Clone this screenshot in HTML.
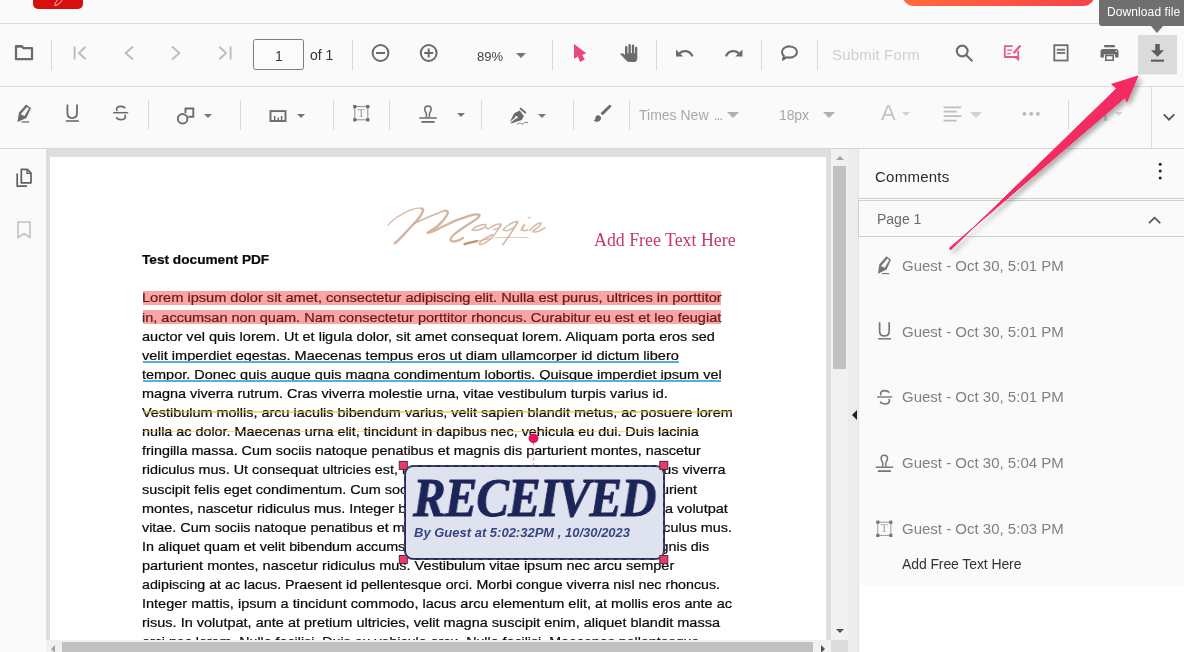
<!DOCTYPE html>
<html>
<head>
<meta charset="utf-8">
<title>PDF Viewer</title>
<style>
*{box-sizing:border-box;margin:0;padding:0}
html,body{width:1184px;height:652px;overflow:hidden;background:#fafafa;font-family:"Liberation Sans",sans-serif;}
.abs{position:absolute}
#root{position:relative;width:1184px;height:652px;overflow:hidden;background:#fafafa}
.hl{position:absolute;left:0;width:1184px;height:1px;background:#dcdcdc}
.sep{position:absolute;width:1px;background:#d9d9d9}
.t{position:absolute;white-space:nowrap;line-height:1;will-change:transform}
svg{position:absolute;overflow:visible}
.ic{fill:#6b6b6b}
.icd{fill:#b9b9b9}
.dd{position:absolute;width:0;height:0;border-left:5.5px solid transparent;border-right:5.5px solid transparent;border-top:5.5px solid #757575}
.dds{position:absolute;width:0;height:0;border-left:4.5px solid transparent;border-right:4.5px solid transparent;border-top:4.5px solid #757575}
.bl{will-change:transform;position:absolute;left:143px;white-space:nowrap;font-size:13px;line-height:15px;height:15px;color:#0a0a0a;transform-origin:0 0;-webkit-text-stroke:0.22px #0a0a0a}
.cm{will-change:transform;position:absolute;left:902px;white-space:nowrap;font-size:15px;line-height:1;color:#808080;transform-origin:0 0}
</style>
</head>
<body>
<div id="root">

<!-- ===== top strip ===== -->
<div class="abs" id="logo" style="left:33px;top:-12px;width:50px;height:21px;border-radius:5px;background:#d80f0f"></div>
<svg style="left:0;top:0" width="100" height="12" viewBox="0 0 100 12"><path d="M62.500 -1C61 2.500 57.500 5.500 55 5.600 54.200 5.300 55.500 2.500 58 -1" fill="none" stroke="#ffd9d9" stroke-width="0.900"/></svg>
<div class="abs" id="pill" style="left:902px;top:-30px;width:193px;height:36px;border-radius:12px;background:linear-gradient(90deg,#ff6b3d 0%,#f7414a 100%)"></div>
<div class="hl" style="top:23px"></div>

<!-- ===== toolbar 1 ===== -->
<div id="tb1">
<!-- folder -->
<svg style="left:0;top:0" width="1184" height="90" viewBox="0 0 1184 90">
 <g id="i-folder" fill="none" stroke="#6b6b6b" stroke-width="2.2" stroke-linejoin="round">
  <path d="M16 59.2V46h5.6l2 2.2H32v11z"/>
  <path d="M16 46.4h5.8" stroke-width="2.6"/>
 </g>
 <g id="i-nav" fill="none" stroke="#bcbcbc" stroke-width="1.9">
  <path d="M74.6 46.5v13M85.6 46.8l-6.6 6.2 6.6 6.2"/>
  <path d="M133 46.5l-7.4 6.5 7.4 6.5"/>
  <path d="M172 46.5l7.4 6.5-7.4 6.5"/>
  <path d="M219.4 46.8l6.6 6.2-6.6 6.2M230.6 46.5v13"/>
 </g>
 <g id="i-zoom" fill="none" stroke="#6b6b6b" stroke-width="2">
  <circle cx="380.5" cy="53" r="7.9"/><path d="M376 53h9"/>
  <circle cx="428.7" cy="53" r="7.9"/><path d="M424.2 53h9M428.7 48.5v9"/>
 </g>
 <path id="i-ptr" fill="#e8487b" d="M574 43.9v14.8l3.9-2.2 2.2 5.4 4.6-2.3-2.5-4.7 4.1-1.7z"/>
 <g id="i-hand" fill="#6b6b6b">
  <path d="M625 47.2a1.2 1.2 0 0 1 2.4 0v6h1v-8a1.2 1.2 0 0 1 2.4 0v8h1v-7.4a1.2 1.2 0 0 1 2.4 0v7.4h.8v-5.2a1.15 1.15 0 0 1 2.3 0v10.4c0 2.4-1.8 3.6-4 3.6h-3.600c-1.700 0-2.800-.7-3.900-1.900l-5.600-6c.9-1.100 2.200-1 3.200-.3l1.600 1.200z"/>
 </g>
 <g id="i-undo" fill="#6b6b6b" transform="translate(0,0.800)">
  <path d="M676 48.600v7.200h7.200l-2.700-2.700c1.500-1.200 3.100-1.700 4.700-1.700 2.900 0 5.100 1.700 6.300 4.600l2-.7c-1.400-3.700-4.500-6-8.300-6-2.300 0-4.500.8-6.200 2.300z"/>
  <path d="M742.400 48.600v7.200h-7.200l2.700-2.700c-1.500-1.200-3.100-1.700-4.700-1.700-2.900 0-5.100 1.700-6.300 4.600l-2-.7c1.400-3.700 4.500-6 8.300-6 2.300 0 4.500.8 6.200 2.300z"/>
 </g>
 <g id="i-comment" fill="none" stroke="#6b6b6b" stroke-width="2.050" stroke-linejoin="round">
  <path d="M789.500 46.400c4.200 0 7.500 2.500 7.500 5.600s-3.300 5.600-7.500 5.600c-1 0-2-.15-2.900-.4l-3.600 2.400.9-3.700c-1.200-1-1.900-2.400-1.900-3.900 0-3.100 3.300-5.600 7.500-5.600z"/>
 </g>
 <g id="i-search" fill="none" stroke="#6b6b6b" stroke-width="2.100">
  <circle cx="962.200" cy="51" r="5.400"/><path d="M966.200 55l6.200 6.200"/>
 </g>
 <g id="i-annot" fill="none" stroke="#e35c8a" stroke-width="1.800">
  <path d="M1012.600 46.200h-7.800v10.800h13.400v-6"/>
  <path d="M1014.200 57.200h4.700v3.600z" fill="#e35c8a" stroke-width="0.600"/>
  <path d="M1007.200 50.200h5M1007.200 53.700h3.400" stroke-width="1.300"/>
  <path d="M1013.600 53.200l6.800-7.800" stroke-width="2.300"/>
 </g>
 <g id="i-form" fill="none" stroke="#6b6b6b" stroke-width="1.800">
  <rect x="1054.300" y="45.200" width="13.300" height="15.300"/>
  <path d="M1056.800 49.700h8.300M1056.800 53.100h8.300" stroke-width="2" stroke="#7a7a7a"/>
 </g>
 <g id="i-print" fill="#6b6b6b">
  <rect x="1104.200" y="45" width="10.600" height="2.300"/>
  <path d="M1103 49h13c1.500 0 2.500 1.100 2.500 2.500v6h-3.400v-3h-11.200v3h-3.400v-6c0-1.400 1-2.500 2.500-2.500z"/>
  <circle cx="1116.200" cy="51.300" r="0.800" fill="#e8e8e8"/>
  <path d="M1105.800 55.500h7.400v4.700h-7.400z" fill="none" stroke="#6b6b6b" stroke-width="1.600"/>
 </g>
 <rect x="1138" y="35" width="39" height="39.500" fill="#dbdbdb"/>
 <g id="i-dl" fill="#5f5f5f">
  <path d="M1155.200 44h4.600v6.200h4.200l-6.500 6.600-6.500-6.600h4.200z"/>
  <rect x="1151" y="59.600" width="13" height="2.100"/>
 </g>
</svg>
<div class="sep" style="left:51px;top:40px;height:30px"></div>
<div class="sep" style="left:352px;top:40px;height:30px"></div>
<div class="sep" style="left:552px;top:40px;height:30px"></div>
<div class="sep" style="left:656px;top:40px;height:30px"></div>
<div class="sep" style="left:761px;top:40px;height:30px"></div>
<div class="sep" style="left:817px;top:40px;height:30px"></div>
<div class="abs" style="left:253.400px;top:39px;width:50.400px;height:30.600px;border:1px solid #7d7d7d;border-radius:2.500px;background:#fbfbfb"></div>
<div class="t" style="left:274.500px;top:48.600px;font-size:14px;color:#3a3a3a">1</div>
<div class="t" style="left:310px;top:48px;font-size:14px;color:#333">of 1</div>
<div class="t" style="left:477px;top:49.500px;font-size:13px;color:#444">89%</div>
<div class="dd" style="left:515.500px;top:52.800px"></div>
<div class="t" style="left:831.500px;top:47.300px;font-size:15px;color:#cfcfcf;letter-spacing:0.180px">Submit Form</div>
</div>
<div class="hl" style="top:86px"></div>

<!-- ===== toolbar 2 ===== -->
<div id="tb2">
<svg style="left:0;top:0" width="1184" height="150" viewBox="0 0 1184 150">
 <g id="i-hl" fill="#6b6b6b" fill-rule="evenodd" transform="translate(-860.400,-151.700) scale(1)"><path d="M886.400 256.200L891.400 259.700 886.800 269.600 877.900 273.700 879.300 264.500zM887.400 258.700l2 1.300-4.500 7.700-3.800-1.800z"/><path d="M882 273h7.600v1.300h-7.600z"/></g>
 <g id="i-ul" fill="none" stroke="#6b6b6b">
  <path d="M67.400 104.500v8.600c0 3 2 5 4.800 5s4.800-2 4.800-5v-8.600" stroke-width="1.800"/>
  <path d="M65.900 121h12.900" stroke-width="1.600"/>
 </g>
 <g id="i-st" fill="none" stroke="#6b6b6b" stroke-width="1.700">
  <path d="M125.100 108.400c-.5-1.300-2-2.100-4.200-2.100-2.600 0-4.300 1.200-4.300 3 0 .7.200 1.200.6 1.700"/>
  <path d="M116.300 117.300c.5 1.500 2.200 2.400 4.600 2.400 2.700 0 4.500-1.300 4.500-3.200 0-.7-.2-1.300-.6-1.800"/>
  <path d="M113.100 112.700h15.100" stroke-width="1.500"/>
 </g>
 <g id="i-shape" fill="none" stroke="#6b6b6b" stroke-width="1.900">
  <path d="M185.500 113v-4.500h7.800v8.300h-5"/>
  <circle cx="182.600" cy="118.800" r="4.800"/>
 </g>
 <g id="i-meas" fill="none" stroke="#6b6b6b">
  <rect x="270.500" y="111.100" width="15" height="9.900" stroke-width="1.900"/>
  <path d="M274.700 120.500v-4.500M278.300 120.500v-3M281.600 120.500v-4.500" stroke-width="1.500"/>
 </g>
 <g id="i-ft">
  <rect x="354.800" y="106.600" width="13" height="13.200" fill="none" stroke="#8c8c8c" stroke-width="1"/>
  <g fill="#6b6b6b"><rect x="353.200" y="105" width="3.200" height="3.200"/><rect x="366.200" y="105" width="3.200" height="3.200"/><rect x="353.200" y="118.200" width="3.200" height="3.200"/><rect x="366.200" y="118.200" width="3.200" height="3.200"/></g>
  <text x="361.300" y="116.700" font-family="Liberation Serif, serif" font-size="11.500" fill="#9a9a9a" text-anchor="middle">T</text>
 </g>
 <g id="i-stamp" fill="none" stroke="#6b6b6b">
  <path d="M426.400 117.600v-3.600c0-1.200-1.700-2.400-1.700-4.700 0-1.900 1.400-3.300 3.200-3.300s3.200 1.400 3.200 3.300c0 2.300-1.700 3.500-1.700 4.700v3.600" stroke-width="1.500"/>
  <path d="M419.300 118h17.500" stroke-width="1.500"/>
  <path d="M421.500 121.900h13" stroke-width="1.800"/>
 </g>
 <g id="i-sig" fill="#6b6b6b">
  <path d="M514.200 113.300l5.600-2.700 4 5.300-2 4-10.400 3.600-.8-.7 5.300-4.400a1.300 1.300 0 1 0-.8-.9l-5.300 4.400z"/>
  <path d="M520 108.300l5.900 4.700" fill="none" stroke="#6b6b6b" stroke-width="2"/>
  <path d="M517.200 124.400c1.200-.9 2.200-1.600 3.200-1.300s1.200 1.100 2.300.9 1.800-1.700 3-1.700 1.200.5 2.300.4" fill="none" stroke="#6b6b6b" stroke-width="0.900"/>
 </g>
 <g id="i-ink" fill="#6b6b6b">
  <path d="M609.700 104.600l1.900 1.900-8.900 8.800-2.200-2z"/>
  <path d="M598 115.200c1.700 0 3 1.300 3 3 0 2.200-2 3.500-4 3.500-1.300 0-2.500-.5-3.300-1.300 1 0 1.600-.8 1.600-2.100 0-1.700 1.100-3.100 2.700-3.100z"/>
 </g>
 <g id="i-align" fill="none" stroke="#bdbdbd" stroke-width="1.700">
  <path d="M943.600 107.300h17.700M943.600 111.700h13.100M943.600 116.200h17.700M943.600 120.700h13.100"/>
 </g>
 <g fill="#b7b7b7"><circle cx="1024.500" cy="113.800" r="1.900"/><circle cx="1031.200" cy="113.800" r="1.900"/><circle cx="1037.900" cy="113.800" r="1.900"/></g>
 <circle cx="1105.600" cy="119.500" r="1.500" fill="#c4c4c4"/>
 <path d="M1103.800 117.500l1.800-3.500 1.800 3.500z" fill="#c4c4c4"/>
 <path id="i-chev" d="M1163.700 114.400l5.300 5.300 5.300-5.300" fill="none" stroke="#555" stroke-width="1.800"/>
</svg>
<div class="sep" style="left:148px;top:100px;height:30px"></div>
<div class="sep" style="left:240px;top:100px;height:30px"></div>
<div class="sep" style="left:333px;top:100px;height:30px"></div>
<div class="sep" style="left:389px;top:100px;height:30px"></div>
<div class="sep" style="left:481px;top:100px;height:30px"></div>
<div class="sep" style="left:573px;top:100px;height:30px"></div>
<div class="sep" style="left:629px;top:100px;height:30px"></div>
<div class="sep" style="left:1068px;top:100px;height:30px"></div>
<div class="sep" style="left:1151px;top:87px;height:61px;background:#dcdcdc"></div>
<div class="dds" style="left:204.200px;top:114px"></div>
<div class="dds" style="left:296.800px;top:114px"></div>
<div class="dds" style="left:456.800px;top:113.200px"></div>
<div class="dds" style="left:538px;top:114px"></div>
<div class="t" style="left:638.600px;top:107.800px;font-size:14px;color:#a8a8a8">Times New<span style="letter-spacing:-1.100px;margin-left:5.200px">...</span></div>
<div class="dd" style="left:726.800px;top:112.100px;border-top-color:#b0b0b0;border-width:6.400px 6.200px 0 6.200px"></div>
<div class="t" style="left:779.300px;top:107.800px;font-size:14px;color:#a8a8a8;letter-spacing:-0.150px">18px</div>
<div class="dd" style="left:823.300px;top:112.100px;border-top-color:#b0b0b0;border-width:6.400px 6.200px 0 6.200px"></div>
<div class="t" style="left:880.800px;top:102.200px;font-size:22px;color:#c4c4c4;">A</div>
<div class="dds" style="left:902.400px;top:112.300px;border-top-color:#d2d2d2;border-width:4.300px 4.100px 0 4.100px"></div>
<div class="dd" style="left:969.700px;top:112.300px;border-top-color:#d2d2d2;border-width:6px 6px 0 6px"></div>
<div class="dds" style="left:1114.700px;top:112px;border-top-color:#dadada;border-width:4.300px 4.100px 0 4.100px"></div>
</div>
<div class="hl" style="top:148px;background:#d6d6d6"></div>

<!-- ===== main ===== -->
<div class="abs" id="viewer" style="left:46px;top:149px;width:812px;height:503px;background:#dedede"></div>
<div class="abs" id="page" style="left:50px;top:157px;width:776px;height:483px;background:#fff;overflow:hidden">
<div class="bl" style="left:92.400px;top:94.60px;font-weight:bold;transform:scaleX(1.0503)">Test document PDF</div>
<div class="bl" style="left:92.400px;top:133.40px;transform:scaleX(1.1221)">Lorem ipsum dolor sit amet, consectetur adipiscing elit. Nulla est purus, ultrices in porttitor</div>
<div class="bl" style="left:92.400px;top:152.51px;transform:scaleX(1.1165)">in, accumsan non quam. Nam consectetur porttitor rhoncus. Curabitur eu est et leo feugiat</div>
<div class="bl" style="left:92.400px;top:171.62px;transform:scaleX(1.1165)">auctor vel quis lorem. Ut et ligula dolor, sit amet consequat lorem. Aliquam porta eros sed</div>
<div class="bl" style="left:92.400px;top:190.73px;transform:scaleX(1.1172)">velit imperdiet egestas. Maecenas tempus eros ut diam ullamcorper id dictum libero</div>
<div class="bl" style="left:92.400px;top:209.84px;transform:scaleX(1.1126)">tempor. Donec quis augue quis magna condimentum lobortis. Quisque imperdiet ipsum vel</div>
<div class="bl" style="left:92.400px;top:228.95px;transform:scaleX(1.1093)">magna viverra rutrum. Cras viverra molestie urna, vitae vestibulum turpis varius id.</div>
<div class="bl" style="left:92.400px;top:248.06px;transform:scaleX(1.1092)">Vestibulum mollis, arcu iaculis bibendum varius, velit sapien blandit metus, ac posuere lorem</div>
<div class="bl" style="left:92.400px;top:267.17px;transform:scaleX(1.1037)">nulla ac dolor. Maecenas urna elit, tincidunt in dapibus nec, vehicula eu dui. Duis lacinia</div>
<div class="bl" style="left:92.400px;top:286.28px;transform:scaleX(1.1030)">fringilla massa. Cum sociis natoque penatibus et magnis dis parturient montes, nascetur</div>
<div class="bl" style="left:92.400px;top:305.39px;transform:scaleX(1.1037)">ridiculus mus. Ut consequat ultricies est, non rhoncus mauris congue porta. Vivamus viverra</div>
<div class="bl" style="left:92.400px;top:324.50px;transform:scaleX(1.1085)">suscipit felis eget condimentum. Cum sociis natoque penatibus et magnis dis parturient</div>
<div class="bl" style="left:92.400px;top:343.61px;transform:scaleX(1.1119)">montes, nascetur ridiculus mus. Integer bibendum sagittis ligula, non faucibus nulla volutpat</div>
<div class="bl" style="left:92.400px;top:362.72px;transform:scaleX(1.1049)">vitae. Cum sociis natoque penatibus et magnis dis parturient montes, nascetur ridiculus mus.</div>
<div class="bl" style="left:92.400px;top:381.83px;transform:scaleX(1.1007)">In aliquet quam et velit bibendum accumsan. Cum sociis natoque penatibus et magnis dis</div>
<div class="bl" style="left:92.400px;top:400.94px;transform:scaleX(1.1127)">parturient montes, nascetur ridiculus mus. Vestibulum vitae ipsum nec arcu semper</div>
<div class="bl" style="left:92.400px;top:420.05px;transform:scaleX(1.0942)">adipiscing at ac lacus. Praesent id pellentesque orci. Morbi congue viverra nisl nec rhoncus.</div>
<div class="bl" style="left:92.400px;top:439.16px;transform:scaleX(1.1155)">Integer mattis, ipsum a tincidunt commodo, lacus arcu elementum elit, at mollis eros ante ac</div>
<div class="bl" style="left:92.400px;top:458.27px;transform:scaleX(1.1156)">risus. In volutpat, ante at pretium ultricies, velit magna suscipit enim, aliquet blandit massa</div>
<div class="bl" style="left:92.400px;top:477.38px;transform:scaleX(1.0943)">orci nec lorem. Nulla facilisi. Duis eu vehicula arcu. Nulla facilisi. Maecenas pellentesque</div>
<div class="abs" style="left:93px;top:134px;width:578.4px;height:13.5px;background:rgba(238,40,38,0.42)"></div>
<div class="abs" style="left:93px;top:153px;width:578px;height:14px;background:rgba(238,40,38,0.42)"></div>
<div class="abs" style="left:93px;top:203.6px;width:535.6px;height:2px;background:#4fb1dc"></div>
<div class="abs" style="left:93px;top:222.8px;width:578.4px;height:2px;background:#4fb1dc"></div>
<div class="abs" style="left:93px;top:254px;width:589.4px;height:1.8px;background:#f5da72;mix-blend-mode:multiply"></div>
<div class="abs" style="left:93px;top:254px;width:589.4px;height:1.8px;background:rgba(245,218,114,0.5)"></div>
<div class="abs" style="left:93px;top:273.7px;width:555.5px;height:1.8px;background:#f5da72;mix-blend-mode:multiply"></div>
<div class="abs" style="left:93px;top:273.7px;width:555.5px;height:1.8px;background:rgba(245,218,114,0.5)"></div>
<div class="t" style="left:543.6px;top:75px;font-family:'Liberation Serif',serif;font-size:17.85px;color:#c8366c">Add Free Text Here</div>
</div>

<!-- ===== right panel ===== -->
<div id="panel">
<!-- left sidebar icons -->
<svg style="left:0;top:149px" width="46" height="120" viewBox="0 149 46 120">
 <g fill="none" stroke="#5f5f5f" stroke-width="1.700" stroke-linejoin="round">
  <path d="M21.300 169.400h6l3.700 3.700v9.700h-9.700z"/>
  <path d="M27 169.600v3.800h3.800" stroke-width="1.300"/>
  <path d="M17.200 173.500v12.600h9.800"/>
 </g>
 <path d="M18 222h12v15.500l-6-3.800-6 3.800z" fill="none" stroke="#c2c2c2" stroke-width="1.600" stroke-linejoin="round"/>
</svg>

<!-- vertical scrollbar -->
<div class="abs" style="left:831px;top:149px;width:17px;height:491px;background:#f1f1f1"></div>
<div class="abs" style="left:848px;top:149px;width:10px;height:503px;background:#ececec"></div>
<div class="abs" style="left:833px;top:166px;width:13px;height:202.500px;background:#c1c1c1"></div>
<div class="abs" style="left:835.500px;top:155.500px;width:0;height:0;border-left:4px solid transparent;border-right:4px solid transparent;border-bottom:4.500px solid #a3a3a3"></div>
<div class="abs" style="left:835.500px;top:628.500px;width:0;height:0;border-left:4px solid transparent;border-right:4px solid transparent;border-top:4.500px solid #505050"></div>
<!-- splitter arrow -->
<div class="abs" style="left:851.700px;top:410px;width:0;height:0;border-top:5px solid transparent;border-bottom:5px solid transparent;border-right:5px solid #222"></div>
<!-- horizontal scrollbar -->
<div class="abs" style="left:46px;top:640px;width:785px;height:12px;background:#f1f1f1"></div>
<div class="abs" style="left:62px;top:642px;width:751px;height:10px;background:#c1c1c1"></div>
<div class="abs" style="left:831px;top:640px;width:17px;height:12px;background:#dcdcdc"></div>
<div class="abs" style="left:50.800px;top:644.500px;width:0;height:0;border-top:4px solid transparent;border-bottom:4px solid transparent;border-right:4.500px solid #a3a3a3"></div>
<div class="abs" style="left:821px;top:644.500px;width:0;height:0;border-top:4px solid transparent;border-bottom:4px solid transparent;border-left:4.500px solid #505050"></div>

<!-- comment panel -->
<div class="abs" style="left:858px;top:149px;width:326px;height:503px;background:#fff;border-left:1px solid #e2e2e2"></div>
<div class="abs" style="left:859px;top:149px;width:325px;height:436px;background:#fafafa"></div>
<div class="t" style="left:874.500px;top:169.300px;font-size:15px;color:#2b2b2b;letter-spacing:0.250px">Comments</div>
<div class="abs" style="left:858px;top:198px;width:326px;height:1px;background:#cfcfcf"></div>
<div class="abs" style="left:858px;top:200px;width:330px;height:37px;border:1px solid #cfcfcf;background:#fafafa"></div>
<div class="t" style="left:876.800px;top:211.800px;font-size:14px;color:#6a6a6a">Page 1</div>
<svg style="left:858px;top:149px" width="326" height="503" viewBox="858 149 326 503">
 <g fill="#222"><circle cx="1160.200" cy="164.300" r="1.500"/><circle cx="1160.200" cy="171.100" r="1.500"/><circle cx="1160.200" cy="177.900" r="1.500"/></g>
 <path d="M1149 223.200l5.600-5.600 5.600 5.600" fill="none" stroke="#555" stroke-width="1.700"/>

 <g id="c-hl" fill="#777" fill-rule="evenodd"><path d="M886.400 256.200L891 259.700 886.600 269.600 877.900 273.700 879.300 264.500zM887.400 258.700l1.800 1.300-4.400 7.700-3.700-1.800z"/><path d="M882 273h7.200v1.200h-7.200z"/></g>
 <g id="c-ul" fill="none" stroke="#777" transform="translate(812.200,217.800)">
  <path d="M67.400 104.500v8.600c0 3 2 5 4.800 5s4.800-2 4.800-5v-8.600" stroke-width="1.700"/>
  <path d="M65.900 121h12.900" stroke-width="1.500"/>
 </g>
 <g id="c-st" fill="none" stroke="#777" stroke-width="1.600" transform="translate(764,284.300)">
  <path d="M125.100 108.400c-.5-1.300-2-2.100-4.200-2.100-2.600 0-4.300 1.200-4.300 3 0 .7.200 1.200.6 1.700"/>
  <path d="M116.300 117.300c.5 1.500 2.200 2.400 4.600 2.400 2.700 0 4.500-1.300 4.500-3.200 0-.7-.2-1.300-.6-1.800"/>
  <path d="M113.100 112.700h15.100" stroke-width="1.400"/>
 </g>
 <g id="c-stamp" fill="none" stroke="#777" transform="translate(456.400,349.200)">
  <path d="M426.400 117.600v-3.600c0-1.200-1.700-2.400-1.700-4.700 0-1.900 1.400-3.300 3.200-3.300s3.200 1.400 3.200 3.300c0 2.300-1.700 3.500-1.700 4.700v3.600" stroke-width="1.500"/>
  <path d="M419.300 118h17.500" stroke-width="1.500"/>
  <path d="M421.500 121.900h13" stroke-width="1.800"/>
 </g>
 <g id="c-ft" transform="translate(523,415.600)">
  <rect x="354.800" y="106.600" width="13" height="13.200" fill="none" stroke="#999" stroke-width="1"/>
  <g fill="#777"><rect x="353.200" y="105" width="3.200" height="3.200"/><rect x="366.200" y="105" width="3.200" height="3.200"/><rect x="353.200" y="118.200" width="3.200" height="3.200"/><rect x="366.200" y="118.200" width="3.200" height="3.200"/></g>
  <text x="361.300" y="116.700" font-family="Liberation Serif, serif" font-size="11.500" fill="#a2a2a2" text-anchor="middle">T</text>
 </g>
</svg>
</div>

<div class="cm" style="top:257.7px;letter-spacing:0">Guest - Oct 30, 5:01 PM</div>
<div class="cm" style="top:323.6px;letter-spacing:0">Guest - Oct 30, 5:01 PM</div>
<div class="cm" style="top:389.4px;letter-spacing:0">Guest - Oct 30, 5:01 PM</div>
<div class="cm" style="top:455.2px;letter-spacing:0">Guest - Oct 30, 5:04 PM</div>
<div class="cm" style="top:521.1px;letter-spacing:0">Guest - Oct 30, 5:03 PM</div>
<div class="t" style="left:902px;top:556.600px;font-size:14px;color:#333;letter-spacing:-0.1px">Add Free Text Here</div>
<!-- ===== overlays ===== -->
<div id="over">
<!-- signature (real coords) -->
<svg style="left:0;top:0" width="1184" height="652" viewBox="0 0 1184 652">
 <g fill="none" stroke="#cfae98" stroke-linecap="round" stroke-linejoin="round">
  <path d="M388 225.300C391 221 400 214.500 409.600 210.300C414 208.600 419 207.900 421.500 208.400" stroke-width="1.300" opacity=".8"/>
  <path d="M421.500 208.400C424.500 209 422.500 213 419.700 217C416 222 412 225.500 408 230C403 235.500 398.500 240.500 394.800 243.300" stroke-width="2.400" opacity=".92"/>
  <path d="M413.800 223.600C420 220.500 432 215.500 439.100 212.700C442 211.500 444 210.700 445.500 210.600" stroke-width="1.700" stroke-dasharray="0.600 0.700" opacity=".9"/>
  <path d="M445.500 210.600C449.500 211 448 214.500 444 219.500C440 224.500 434.100 229 430 231.300C427.500 232.600 426.800 233 428.500 232.900C431.500 232.600 437 229.500 443.300 226.200C452 221.700 462 217.800 470 215.600C474 214.600 478 214 479.300 214.900" stroke-width="2.300" opacity=".92"/>
  <path d="M479.300 214.900C480.500 216.500 476 219.500 471.900 222C466 225.800 458 231 453.500 235C450.500 237.800 449.600 240 451.500 241C454.500 242.300 459 240.500 463 238" stroke-width="2.200" opacity=".92"/>
  <path d="M472 230C473.500 228 478 225.600 482 224.700C484.500 224.200 486.500 224.200 486 225.300C485 227.200 481.500 229.200 478 230C476 230.400 473.500 230.500 472.500 230" stroke-width="1.500" opacity=".85"/>
  <path d="M486 227.500C487 228.800 488.500 229.200 490 228C492.500 226 497 223.800 500.500 224C502 224.200 500.500 226.500 498.500 228C497 229.100 495 229.700 494 229.300" stroke-width="1.500" opacity=".85"/>
  <path d="M500.800 225C499 228.500 496.500 232.500 493 236.500C489.500 240.300 484 244 480.300 244.500C478.500 244.300 479.500 242.500 482 240.500C485 238.200 489.500 236 492.500 234.500" stroke-width="1.600" opacity=".85"/>
  <path d="M503 230C504.500 227.500 508 225 511 223.500C514 222 517.500 221 517.500 222C517.300 224 514 227.500 510.500 229.500C508 230.700 505 231 503.500 230" stroke-width="1.500" opacity=".85"/>
  <path d="M517.800 221.500C516 225.500 513.500 229 511 233C508.500 237 505.500 241.500 502.700 244.700" stroke-width="1.600" opacity=".88"/>
  <path d="M520.900 230.300C522 228 523.300 225.800 524.500 224.300C523.500 226.500 522 229.500 522.800 230.400C524 231.300 526.500 230.500 528 229.800" stroke-width="1.500" opacity=".85"/>
  <path d="M529.800 230.500C531.500 228.500 534 226 536.500 224.500C538.500 223.300 541.200 222.600 541 223.600C540.500 225.500 537.500 228 535 229.500C533 230.800 532 231.800 534 232C537.500 232.200 541.500 230 544.800 227.600" stroke-width="1.600" opacity=".85"/>
  <path d="M528.500 218L530.200 217.300" stroke-width="1.400" opacity=".8"/>
  <path d="M464.500 244.200C468 243 472.500 242 477 241.200" stroke-width="2.300" stroke="#c48f72"/>
  <path d="M477 241.200C481 240.300 486 239.200 491 238.300" stroke-width="1.300" opacity=".8"/>
  <path d="M494.700 237.900C505 237.300 518 237.200 528 237.600" stroke-width="0.900" opacity=".8"/>
 </g>
</svg>

<!-- stamp -->
<div class="abs" id="stamp" style="left:403.600px;top:465.200px;width:261px;height:95px;border:2px solid #262b55;border-radius:9px;background:#dfe3f0"></div>
<div class="t" id="rcv" style="left:413px;top:471.200px;font-family:'Liberation Serif',serif;font-weight:bold;font-style:italic;font-size:54px;color:#1b2558;-webkit-text-stroke:0.9px #1b2558;transform-origin:0 0;transform:scaleX(0.905);letter-spacing:-1px">RECEIVED</div>
<div class="t" id="rcvby" style="left:413.500px;top:526px;font-weight:bold;font-style:italic;font-size:13px;color:#38467f;transform-origin:0 0">By Guest at 5:02:32PM , 10/30/2023</div>
<svg style="left:0;top:0" width="1184" height="652" viewBox="0 0 1184 652">
 <rect x="404.400" y="466" width="259.400" height="93.400" rx="8.500" fill="none" stroke="#8a7a9a" stroke-width="1" stroke-dasharray="5 4" opacity=".55"/>
 <path d="M533.500 443v22" stroke="#e8406f" stroke-width="1.200" stroke-dasharray="2.500 2.500" fill="none" opacity=".6"/>
 <circle cx="533.500" cy="438.300" r="4.900" fill="#e3165b"/>
 <g fill="#e83a6d" stroke="#5b2b3b" stroke-width="1">
  <rect x="399.300" y="461.400" width="8" height="8"/>
  <rect x="659.800" y="461.400" width="8" height="8"/>
  <rect x="399.300" y="555.500" width="8" height="8"/>
  <rect x="659.800" y="555.500" width="8" height="8"/>
 </g>
</svg>

<svg style="left:0;top:0" width="1184" height="652" viewBox="0 0 1184 652">
 <defs><filter id="ash" x="-10%" y="-10%" width="130%" height="130%"><feGaussianBlur in="SourceAlpha" stdDeviation="2.400"/><feOffset dx="2.500" dy="2.500"/><feComponentTransfer><feFuncA type="linear" slope="0.320"/></feComponentTransfer><feMerge><feMergeNode/><feMergeNode in="SourceGraphic"/></feMerge></filter></defs>
 <path d="M950.7 249.8 L1116.7 88.4 L1111.6 84.3 L1138.0 76.0 L1126.9 101.8 L1125.1 97.6 L949.3 248.2Z" fill="#f42a62" filter="url(#ash)" stroke="#f42a62" stroke-width="1" stroke-linejoin="round"/>
</svg>
<!-- tooltip -->
<div class="abs" style="left:1099px;top:-4px;width:90px;height:30px;background:#6f6f6f;border-radius:3px"></div>
<div class="abs" style="left:1151px;top:26px;width:0;height:0;border-left:6px solid transparent;border-right:6px solid transparent;border-top:7px solid #6f6f6f"></div>
<div class="t" style="left:1106.500px;top:5.800px;font-size:12px;color:#fff;letter-spacing:0.100px">Download file</div>
</div>

</div>
</body>
</html>
